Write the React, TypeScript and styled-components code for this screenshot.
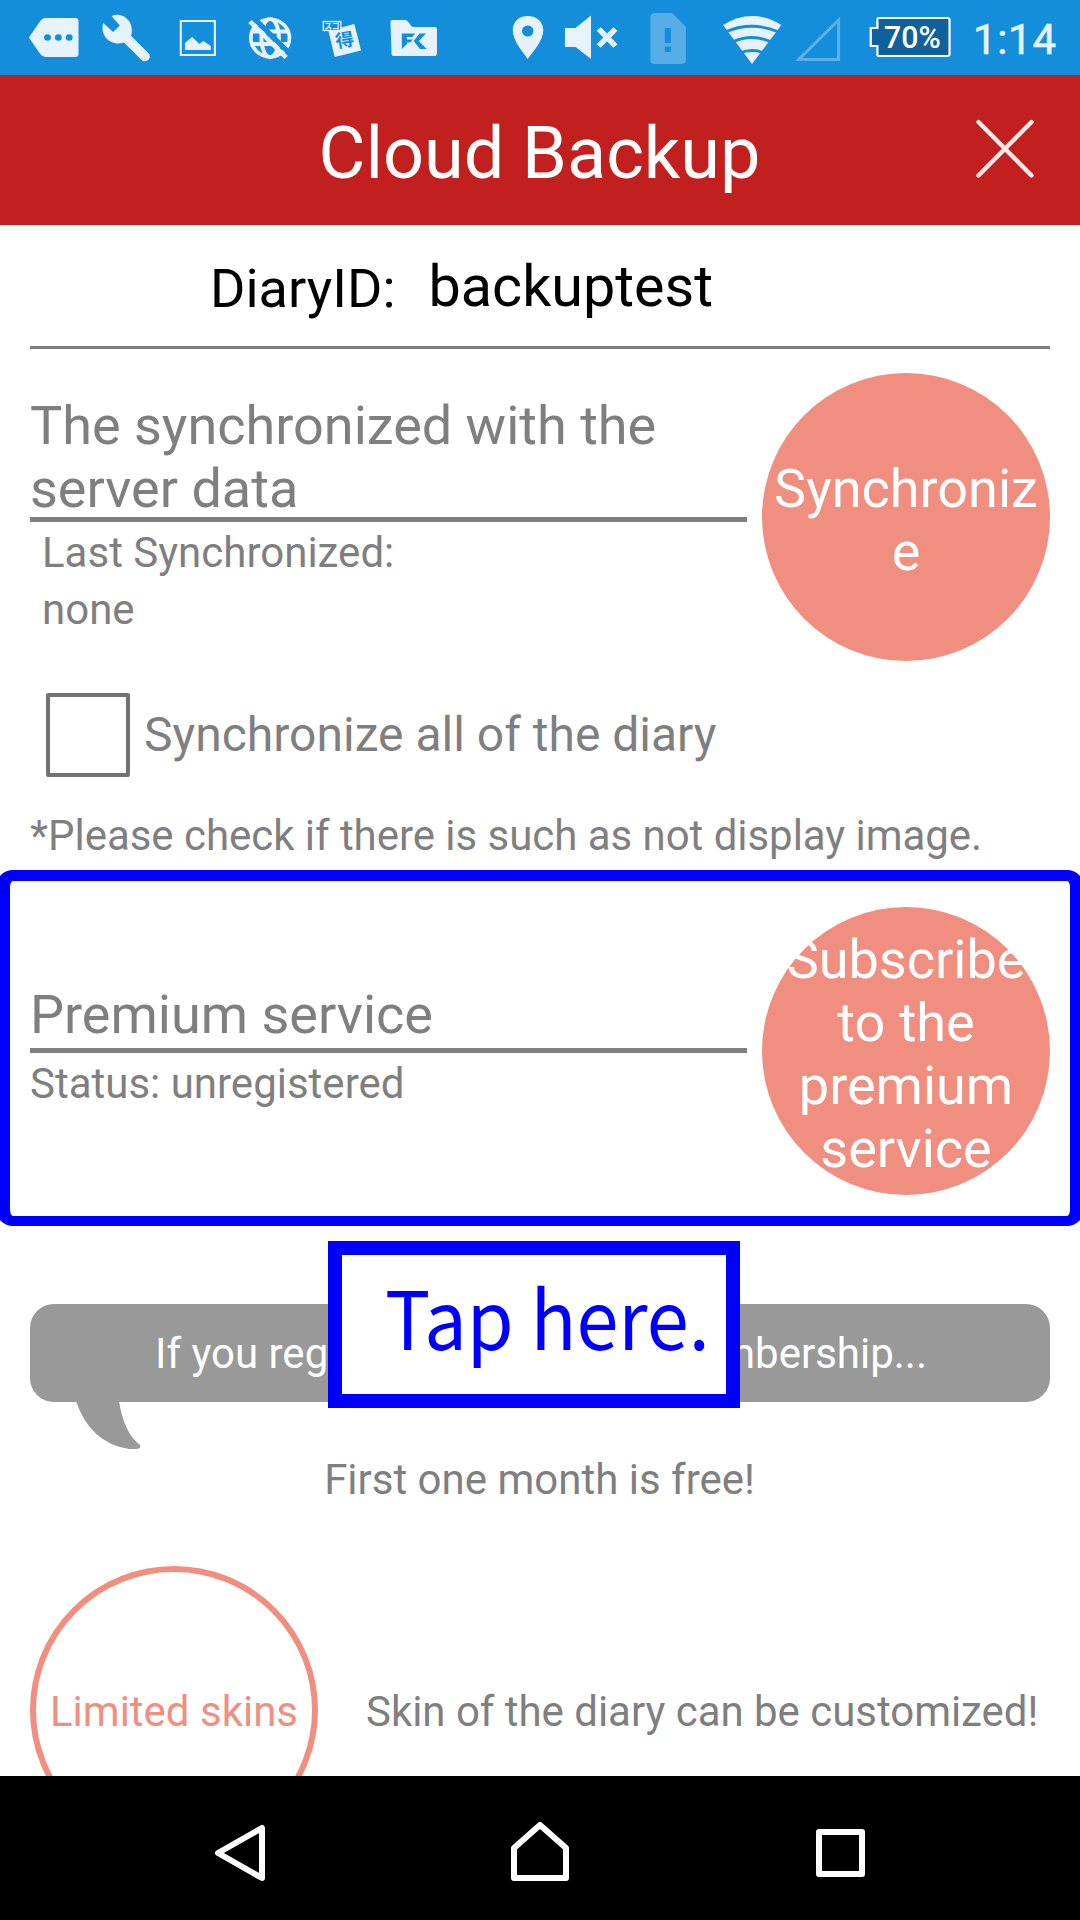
import React from "react";
import styled, { createGlobalStyle } from "styled-components";

const Global = createGlobalStyle`
  * { box-sizing: border-box; }
  body { margin: 0; background: #fff; }
`;

const Screen = styled.div`
  width: 1080px;
  height: 1920px;
  display: flex;
  flex-direction: column;
  overflow: hidden;
  background: #fff;
  color: #7f7f7f;
  font-family: Roboto, "Liberation Sans", sans-serif;
  font-size: 42px;
  line-height: 1;
`;

const StatusBar = styled.header`
  flex: none;
  height: 75px;
  display: flex;
  background: #148ddb;
`;

const StatusIcons = styled.svg`
  display: block;
  width: 1080px;
  height: 75px;
`;

const TitleBar = styled.div`
  flex: none;
  height: 150px;
  display: grid;
  grid-template-columns: 150px 1fr 150px;
  align-items: center;
  justify-items: center;
  background: #c2201f;
`;

const Title = styled.h1`
  margin: 8px 1px 0 0;
  font-size: 72px;
  font-weight: 400;
  color: #fff;
  grid-column: 2;
`;

const CloseButton = styled.button`
  display: block;
  border: 0;
  padding: 0;
  margin: 0 0 2px;
  background: none;
  svg { display: block; }
`;

const Content = styled.main`
  flex: 1;
  min-height: 0;
  overflow: hidden;
  display: flex;
  flex-direction: column;
`;

const DiaryRow = styled.div`
  flex: none;
  height: 124px;
  margin: 0 30px;
  padding: 0 0 0 180px;
  display: flex;
  align-items: baseline;
  border-bottom: 3px solid #7f7f7f;
  color: #000;
  line-height: 126px;
  font-size: 54px;
`;

const DiaryName = styled.span`
  margin-left: 33px;
  font-size: 57.5px;
  transform: translateY(-1px);
`;

const Section = styled.section<{ $top: number }>`
  flex: none;
  display: flex;
  justify-content: space-between;
  align-items: flex-start;
  margin: ${(p) => p.$top}px 30px 0;
`;

const Info = styled.div<{ $top: number }>`
  width: 717px;
  padding-top: ${(p) => p.$top}px;
`;

const Heading = styled.h2<{ $height: number }>`
  margin: 0;
  height: ${(p) => p.$height}px;
  border-bottom: 5px solid #7f7f7f;
  font-size: 54px;
  font-weight: 400;
  line-height: 63px;
`;

const Detail = styled.p<{ $indent?: number; $top?: number }>`
  margin: ${(p) => p.$top ?? 0}px 0 0 ${(p) => p.$indent ?? 0}px;
  line-height: 57px;
`;

const RoundButton = styled.button`
  width: 288px;
  height: 288px;
  border: 0;
  border-radius: 50%;
  padding: 6px 5px 0;
  background: #f08f80;
  color: #fff;
  font: 400 54px/63px Roboto, sans-serif;
  text-align: center;
  word-break: break-word;
  overflow: hidden;
`;

const CheckRow = styled.label`
  flex: none;
  display: flex;
  align-items: center;
  height: 86px;
  margin: 31px 0 0 46px;
  font-size: 48px;
`;

const CheckBox = styled.span`
  width: 84px;
  height: 84px;
  margin-right: 14px;
  border: 4px solid #737373;
  border-radius: 2px;
`;

const Note = styled.p`
  flex: none;
  margin: 29px 0 0 30px;
  height: 63px;
  line-height: 57px;
  letter-spacing: -0.04px;
`;

const Highlight = styled.div`
  flex: none;
  height: 356px;
  margin: 0 -4px;
  border: 10px solid #00f;
  border-width: 11px 14px 10px;
  border-radius: 17px;
  padding: 26px 20px 0;
  ${Section} { margin: 0; }
`;

const Bubble = styled.div`
  flex: none;
  position: relative;
  display: flex;
  justify-content: space-between;
  height: 98px;
  margin: 78px 30px 0;
  padding: 0 123px 0 125px;
  border-radius: 24px;
  background: #999;
  color: #fff;
  line-height: 100px;
  white-space: nowrap;
`;

const Tail = styled.svg`
  position: absolute;
  left: 46px;
  top: 97px;
`;

const Callout = styled.div`
  position: absolute;
  left: 298px;
  top: -63px;
  width: 412px;
  height: 167px;
  border: 14px solid #00f;
  padding-left: 43px;
  background: #fff;
  color: #00f;
  font: 400 80.5px/120px "Noto Sans CJK JP", "Noto Sans", sans-serif;
`;

const CalloutText = styled.span`
  display: block;
  width: 340px;
  transform: scaleX(0.939);
  transform-origin: 0 50%;
`;

const Free = styled.p`
  flex: none;
  margin: 49px 1px 0 0;
  line-height: 57px;
  text-align: center;
`;

const Feature = styled.div`
  flex: none;
  display: flex;
  align-items: center;
  height: 288px;
  margin: 58px 30px 0;
`;

const FeatureText = styled.span`
  padding-top: 4px;
  letter-spacing: -0.03px;
`;

const FeatureBadge = styled.div`
  width: 288px;
  height: 288px;
  margin-right: 48px;
  padding-top: 4px;
  display: flex;
  align-items: center;
  justify-content: center;
  border: 6px solid #f08f80;
  border-radius: 50%;
  color: #f08f80;
  white-space: nowrap;
`;

const NavBar = styled.nav`
  flex: none;
  height: 144px;
  background: #000;
  svg { display: block; }
`;

function StatusBarIcons() {
  const ink = "#e6f3fc";
  const bg = "#148ddb";
  return (
    <StatusIcons viewBox="0 0 1080 75">
      <g transform="scale(1.033 1)">
        <path d="M28 37.500L39 21Q41 18 44 18H73Q76 18 76 21V54Q76 57 73 57H44Q41 57 39 54Z" fill={ink} />
        <g fill={bg}><circle cx="46" cy="37.500" r="3.300" /><circle cx="56.500" cy="37.500" r="3.300" /><circle cx="67" cy="37.500" r="3.300" /></g>
        <path d="M108 16C118 11 131 21 127 36L143.500 53A4.500 4.500 0 0 1 137 60L120 42.500C108 47 96 36 100 23L109.500 32L116 25.500Z" fill={ink} />
        <rect x="175" y="21" width="33" height="34" fill="none" stroke={ink} strokeWidth="2" />
        <path d="M179 50V43L186 37L193 44L197 41L204 46V50Z" fill={ink} />
        <circle cx="261.500" cy="38" r="18.700" fill="none" stroke={ink} strokeWidth="3.600" />
        <g fill="none" stroke={ink} strokeWidth="3.800">
          <ellipse cx="261.500" cy="38" rx="8.500" ry="19" />
          <path d="M243 31.500H280M243 44H280" />
        </g>
        <path d="M245 17.500L281 54" stroke={bg} strokeWidth="5" />
        <path d="M242 21.500L277 57.500" stroke={ink} strokeWidth="4.500" />
        <path d="M318 31L343 24L349.500 50.500L324 57Z" fill={ink} />
        <rect x="313" y="21.500" width="17" height="9" fill={bg} stroke={ink} strokeWidth="1.300" />
        <text x="314" y="28.800" fontFamily="Noto Sans CJK JP, sans-serif" fontWeight="700" fontSize="7.500" fill={ink}>スゴ</text>
        <text x="0" y="0" transform="translate(326 48) rotate(-10)" fontFamily="Noto Sans CJK JP, sans-serif" fontWeight="700" fontSize="18" fill={bg}>得</text>
        <path d="M378 22Q378 20 380 20H392Q395 20 398 26Q399 27 401 27H421Q423 27 423 29V53Q423 56 421 56H381Q379 56 379 53Z" fill={ink} />
        <path d="M389 49V33.500H402L399 37H394V39.500H400L397 42.500H394V44Z" fill={bg} />
        <path d="M406 33.500H412.500L405.500 41L413 49H406.500L400.500 41Z" fill={bg} />
      </g>
      <g transform="matrix(1.11 0 0 1 -55 0)">
        <path fillRule="evenodd" d="M525 16C517 16 511.500 22 511.500 30C511.500 40 519 50 525 59C531 50 539 40 539 30C539 22 533 16 525 16ZM525 25.500A5.200 5.500 0 1 1 525 36.500A5.200 5.500 0 1 1 525 25.500Z" fill={ink} />
        <path d="M558.500 28H568L582 15.500V59L568 47H558.500Z" fill={ink} />
        <path d="M589 29L604 46M604 29L589 46" stroke={ink} strokeWidth="5" />
        <path d="M640 13H655L667.500 27V60Q667.500 64 663.500 64H639.500Q635.500 64 635.500 60V17Q635.500 13 640 13Z" fill="#57ade5" />
        <path d="M648.500 28H654V43H648.500ZM648.500 46.500H654V52H648.500Z" fill={bg} />
        <path d="M701 25Q727 7 753.500 25L727 64Z" fill={ink} />
        <g fill="none" stroke={bg} strokeWidth="2.800"><path d="M704 31.500Q727 21 750 31.500M709.500 42Q727 33 744.500 42M716 53Q727 48 738 53" /></g>
        <path d="M769 59.500L805 20V59.500Z" fill="none" stroke="#5db0e6" strokeWidth="2.800" />
        <path d="M841 18H903Q905 18 905 20V54Q905 56 903 56H841Q840 56 840 54V46H834V28H840V20Q840 18 841 18Z" fill="#0e619b" stroke="#fff" strokeWidth="2" />
        <text x="846" y="48" fontFamily="Roboto, sans-serif" fontWeight="500" fontSize="32" fill="#fff" textLength="51" lengthAdjust="spacingAndGlyphs">70%</text>
      </g>
      <text x="973" y="54" fontFamily="Roboto, sans-serif" fontWeight="400" fontSize="42" fill={ink} stroke={ink} strokeWidth="0.600" textLength="83">1:14</text>
    </StatusIcons>
  );
}

export default function App() {
  return (
    <Screen>
      <Global />
      <StatusBar><StatusBarIcons /></StatusBar>
      <TitleBar>
        <Title>Cloud Backup</Title>
        <CloseButton aria-label="Close">
          <svg width="60" height="60" viewBox="0 0 60 60">
            <path d="M3.500 3L56.500 56.500M56.500 3L3.500 56.500" stroke="#fbe9e8" strokeWidth="4.400" strokeLinecap="round" />
          </svg>
        </CloseButton>
      </TitleBar>
      <Content>
        <DiaryRow>DiaryID:<DiaryName>backuptest</DiaryName></DiaryRow>
        <Section $top={24}>
          <Info $top={21}>
            <Heading $height={128}>The synchronized with the server data</Heading>
            <Detail $indent={12} $top={2}>Last Synchronized:</Detail>
            <Detail $indent={12}>none</Detail>
          </Info>
          <RoundButton>Synchroniz<br />e</RoundButton>
        </Section>
        <CheckRow><CheckBox />Synchronize all of the diary</CheckRow>
        <Note>*Please check if there is such as not display image.</Note>
        <Highlight>
          <Section $top={0}>
            <Info $top={76}>
              <Heading $height={70}>Premium service</Heading>
              <Detail $top={2}>Status: unregistered</Detail>
            </Info>
            <RoundButton>Subscribe to the premium service</RoundButton>
          </Section>
        </Highlight>
        <Bubble>
          <span>If you reg</span>
          <span>mbership...</span>
          <Tail width="66" height="49" viewBox="0 0 66 49">
            <path d="M0 0H43Q48 32 64 44Q65 48 60 48H53Q14 42 0 0Z" fill="#999" />
          </Tail>
          <Callout><CalloutText>Tap here.</CalloutText></Callout>
        </Bubble>
        <Free>First one month is free!</Free>
        <Feature>
          <FeatureBadge>Limited skins</FeatureBadge>
          <FeatureText>Skin of the diary can be customized!</FeatureText>
        </Feature>
      </Content>
      <NavBar>
        <svg width="1080" height="144" viewBox="0 0 1080 144" fill="none" stroke="#fff" strokeWidth="6" strokeLinejoin="round">
          <path d="M262 52V102L218 77Z" />
          <path d="M514 102V72L540 49L566 72V102Z" />
          <rect x="819" y="56" width="43" height="42" />
        </svg>
      </NavBar>
    </Screen>
  );
}
